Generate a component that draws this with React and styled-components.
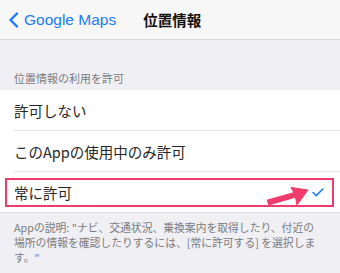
import React from 'react';
import styled, { createGlobalStyle } from 'styled-components';

const GlobalStyle = createGlobalStyle`
  body {
    margin: 0;
    background: #efeff4;
    font-family: "Liberation Sans", "Noto Sans CJK JP", sans-serif;
  }
`;

const Screen = styled.div`
  width: 340px;
  height: 273px;
  overflow: hidden;
  background: #efeff4;
`;

const NavBar = styled.div`
  height: 39px;
  display: flex;
  align-items: center;
  background: #f7f7f8;
  border-bottom: 1px solid #d6d6da;
`;

const BackButton = styled.div`
  display: flex;
  align-items: center;
  gap: 5px;
  padding-left: 8px;
  color: #1b7cf4;
  font-size: 15.5px;
`;

const Title = styled.div`
  margin-left: 27px;
  font-family: "Noto Sans CJK JP", sans-serif;
  font-weight: 700;
  font-size: 14.5px;
  color: #111;
`;

const SectionHeader = styled.div`
  padding: 32px 14px 5px;
  font-family: "Noto Sans CJK JP", sans-serif;
  font-size: 11px;
  line-height: 13px;
  color: #7b7b80;
`;

const List = styled.div`
  background: #fff;
  border-bottom: 1px solid #dcdce0;
`;

const Row = styled.div`
  position: relative;
  height: 40px;
  display: flex;
  align-items: center;
  justify-content: space-between;
  padding: 0 16px 0 14px;
  font-family: "Noto Sans CJK JP", sans-serif;
  font-size: 14.5px;
  color: #262626;
  & + & {
    border-top: 1px solid #e3e3e6;
  }
  & + &::before {
    content: '';
    position: absolute;
    top: -1px;
    left: 0;
    width: 14px;
    height: 1px;
    background: #fff;
  }
`;

const Highlight = styled.div`
  position: absolute;
  top: 6px;
  left: 5px;
  right: 6px;
  bottom: 5px;
  border: 2px solid #f03c6c;
  pointer-events: none;
`;

const Arrow = styled.svg`
  position: absolute;
  top: 0;
  left: 0;
  overflow: visible;
`;

const Footer = styled.div`
  padding: 7px 14px 0;
  font-family: "Noto Sans CJK JP", sans-serif;
  font-size: 10.8px;
  line-height: 15px;
  color: #7b7b80;
`;

const Chevron = () => (
  <svg width="11" height="16" viewBox="0 0 11 16">
    <path d="M9 1.5 L2.5 8 L9 14.5" fill="none" stroke="#1b7cf4" strokeWidth="2.4" strokeLinecap="round" strokeLinejoin="round" />
  </svg>
);

const Check = () => (
  <svg width="12" height="9" viewBox="0 0 12 9">
    <path d="M1 4.5 L4.3 7.6 L10.8 1" fill="none" stroke="#1b7cf4" strokeWidth="1.5" strokeLinecap="round" strokeLinejoin="round" />
  </svg>
);

export default function App() {
  return (
    <Screen>
      <GlobalStyle />
      <NavBar>
        <BackButton>
          <Chevron />
          <span>Google Maps</span>
        </BackButton>
        <Title>位置情報</Title>
      </NavBar>

      <SectionHeader>位置情報の利用を許可</SectionHeader>

      <List>
        <Row>許可しない</Row>
        <Row>このAppの使用中のみ許可</Row>
        <Row>
          <span>常に許可</span>
          <Check />
          <Highlight />
          <Arrow width="340" height="40" viewBox="0 0 340 40">
            <polygon
              points="267.2,28.1 294,20.6 291,15.5 308,18 297,33 295.5,25.2 268.8,32.9"
              fill="#f03c6c"
              stroke="#f03c6c"
              strokeWidth="1"
              strokeLinejoin="round"
            />
          </Arrow>
        </Row>
      </List>

      <Footer>
        Appの説明: "ナビ、交通状況、乗換案内を取得したり、付近の<br />
        場所の情報を確認したりするには、[常に許可する] を選択しま<br />
        す。"
      </Footer>
    </Screen>
  );
}
